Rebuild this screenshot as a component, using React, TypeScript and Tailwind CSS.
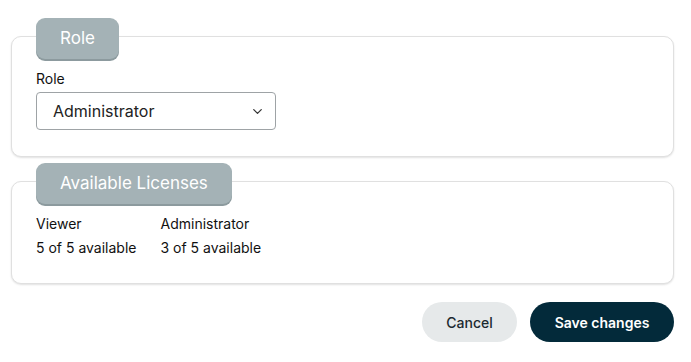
import { ChevronDown } from "lucide-react";

function Section({ title, children, className }: { title: string; children: React.ReactNode; className?: string }) {
  return (
    <div className={className}>
      <div className="relative z-10 ml-[25px] inline-flex h-[41px] items-center rounded-[9px] bg-[#a4b2b6] px-6 text-[17px] text-white shadow-[0_2px_0_#8c9a9e]">
        {title}
      </div>
      <div className="-mt-[23px] rounded-[10px] border border-[#e0e0e0] bg-white shadow-[0_1px_2px_rgba(0,0,0,0.12)]">
        {children}
      </div>
    </div>
  );
}

export default function App() {
  return (
    <div className="min-h-screen bg-white pl-[11px] pt-[18px] font-['Inter',sans-serif] text-[#111]">
      <div className="w-[663px]">
        <Section title="Role">
          <div className="px-6 pb-[26px] pt-[32px]">
            <div className="text-[14px] leading-5">Role</div>
            <div className="mt-[3px] flex h-[38px] w-[240px] items-center justify-between rounded-[4px] border border-[#9ea3a6] pl-4 pr-[10px] text-[16px] text-[#222]">
              <span>Administrator</span>
              <ChevronDown size={15} strokeWidth={2} className="text-[#333]" />
            </div>
          </div>
        </Section>

        <Section title="Available Licenses" className="mt-[6px]">
          <div className="flex gap-6 px-6 pb-[23px] pt-[30px] text-[14px] leading-6">
            <div>
              <div>Viewer</div>
              <div>5 of 5 available</div>
            </div>
            <div>
              <div>Administrator</div>
              <div>3 of 5 available</div>
            </div>
          </div>
        </Section>

        <div className="mt-[18px] flex justify-end gap-[13px]">
          <button className="h-10 w-[95px] rounded-full bg-[#e6e9ea] text-[14px] font-medium text-[#1c2a30]">
            Cancel
          </button>
          <button className="h-10 w-[144px] rounded-full bg-[#032a3a] text-[14px] font-semibold text-white">
            Save changes
          </button>
        </div>
      </div>
    </div>
  );
}
